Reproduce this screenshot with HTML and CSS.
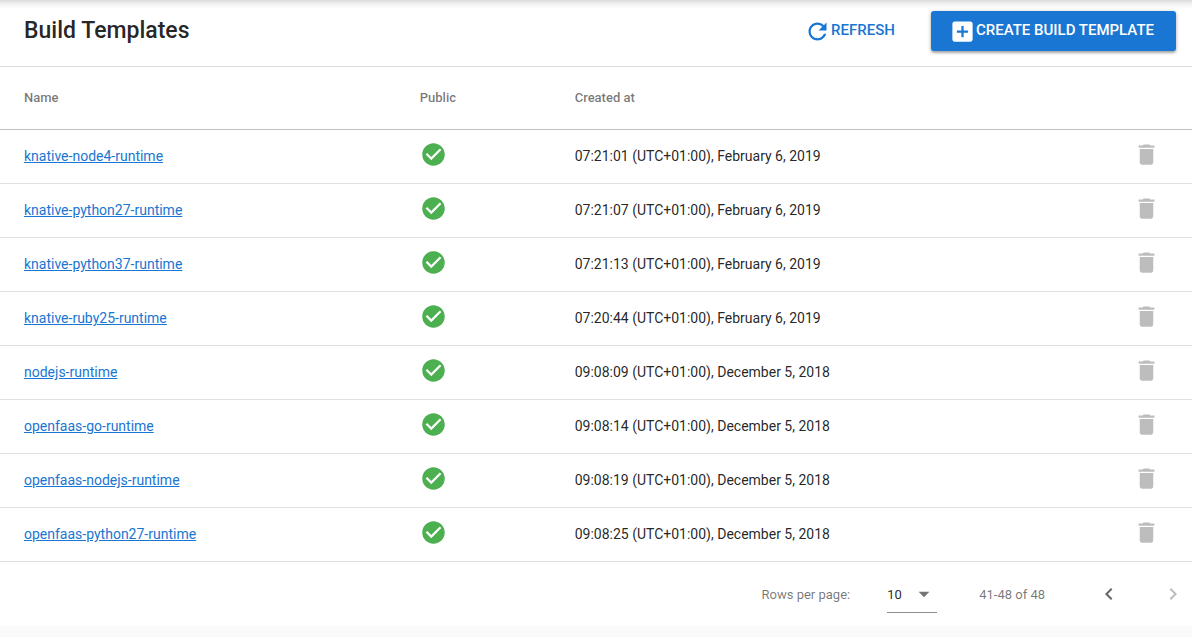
FILE: index.html
```html
<!DOCTYPE html>
<html lang="en">
<head>
<meta charset="utf-8">
<meta name="viewport" content="width=device-width, initial-scale=1">
<title>Build Templates</title>
<link rel="stylesheet" href="styles.css">
</head>
<body>
<svg class="sprite" aria-hidden="true">
  <symbol id="refresh" viewBox="0 0 24 24"><path d="M17.65 6.35C16.2 4.9 14.21 4 12 4c-4.42 0-7.99 3.58-7.99 8s3.57 8 7.99 8c3.73 0 6.84-2.55 7.73-6h-2.08c-.82 2.33-3.04 4-5.65 4-3.31 0-6-2.69-6-6s2.69-6 6-6c1.66 0 3.14.69 4.22 1.78L13 11h7V4l-2.35 2.35z"/></symbol>
  <symbol id="add" viewBox="0 0 24 24"><path d="M19 3H5c-1.11 0-2 .9-2 2v14c0 1.1.89 2 2 2h14c1.1 0 2-.9 2-2V5c0-1.1-.9-2-2-2zm-2 10h-4v4h-2v-4H7v-2h4V7h2v4h4v2z"/></symbol>
  <symbol id="check" viewBox="0 0 24 24"><path d="M12 2C6.480 2 2 6.480 2 12s4.480 10 10 10 10-4.480 10-10S17.520 2 12 2zm-2 15l-5-5 1.410-1.410L10 14.170l7.590-7.590L19 8l-9 9z"/></symbol>
  <symbol id="trash" viewBox="0 0 24 24"><path d="M6 19c0 1.100.9 2 2 2h8c1.100 0 2-.9 2-2V7H6v12zM19 4h-3.500l-1-1h-5l-1 1H5v2h14V4z"/></symbol>
  <symbol id="left" viewBox="0 0 24 24"><path d="M15.410 16.590L10.830 12l4.580-4.590L14 6l-6 6 6 6 1.410-1.410z"/></symbol>
  <symbol id="right" viewBox="0 0 24 24"><path d="M8.590 16.590L13.170 12 8.590 7.410 10 6l6 6-6 6-1.410-1.410z"/></symbol>
  <symbol id="drop" viewBox="0 0 24 24"><path d="M7 10l5 5 5-5z"/></symbol>
</svg>
<main class="panel">
  <header class="toolbar">
    <h1 class="title">Build Templates</h1>
    <div class="actions">
      <button class="button button-text" type="button"><svg class="icon"><use href="#refresh"/></svg><span class="label">REFRESH</span></button>
      <button class="button button-primary" type="button"><svg class="icon"><use href="#add"/></svg><span class="label">CREATE BUILD TEMPLATE</span></button>
    </div>
  </header>
  <table class="table">
    <colgroup><col class="col-name"><col class="col-public"><col><col class="col-actions"></colgroup>
    <thead>
      <tr><th scope="col">Name</th><th scope="col">Public</th><th scope="col">Created at</th><td></td></tr>
    </thead>
    <tbody>
      <tr><td><a class="link" href="#knative-node4-runtime">knative-node4-runtime</a></td><td><svg class="icon public" role="img" aria-label="Public"><use href="#check"/></svg></td><td>07:21:01 (UTC+01:00), February 6, 2019</td><td><button class="icon-button" type="button" aria-label="Delete knative-node4-runtime"><svg class="icon"><use href="#trash"/></svg></button></td></tr>
      <tr><td><a class="link" href="#knative-python27-runtime">knative-python27-runtime</a></td><td><svg class="icon public" role="img" aria-label="Public"><use href="#check"/></svg></td><td>07:21:07 (UTC+01:00), February 6, 2019</td><td><button class="icon-button" type="button" aria-label="Delete knative-python27-runtime"><svg class="icon"><use href="#trash"/></svg></button></td></tr>
      <tr><td><a class="link" href="#knative-python37-runtime">knative-python37-runtime</a></td><td><svg class="icon public" role="img" aria-label="Public"><use href="#check"/></svg></td><td>07:21:13 (UTC+01:00), February 6, 2019</td><td><button class="icon-button" type="button" aria-label="Delete knative-python37-runtime"><svg class="icon"><use href="#trash"/></svg></button></td></tr>
      <tr><td><a class="link" href="#knative-ruby25-runtime">knative-ruby25-runtime</a></td><td><svg class="icon public" role="img" aria-label="Public"><use href="#check"/></svg></td><td>07:20:44 (UTC+01:00), February 6, 2019</td><td><button class="icon-button" type="button" aria-label="Delete knative-ruby25-runtime"><svg class="icon"><use href="#trash"/></svg></button></td></tr>
      <tr><td><a class="link" href="#nodejs-runtime">nodejs-runtime</a></td><td><svg class="icon public" role="img" aria-label="Public"><use href="#check"/></svg></td><td>09:08:09 (UTC+01:00), December 5, 2018</td><td><button class="icon-button" type="button" aria-label="Delete nodejs-runtime"><svg class="icon"><use href="#trash"/></svg></button></td></tr>
      <tr><td><a class="link" href="#openfaas-go-runtime">openfaas-go-runtime</a></td><td><svg class="icon public" role="img" aria-label="Public"><use href="#check"/></svg></td><td>09:08:14 (UTC+01:00), December 5, 2018</td><td><button class="icon-button" type="button" aria-label="Delete openfaas-go-runtime"><svg class="icon"><use href="#trash"/></svg></button></td></tr>
      <tr><td><a class="link" href="#openfaas-nodejs-runtime">openfaas-nodejs-runtime</a></td><td><svg class="icon public" role="img" aria-label="Public"><use href="#check"/></svg></td><td>09:08:19 (UTC+01:00), December 5, 2018</td><td><button class="icon-button" type="button" aria-label="Delete openfaas-nodejs-runtime"><svg class="icon"><use href="#trash"/></svg></button></td></tr>
      <tr><td><a class="link" href="#openfaas-python27-runtime">openfaas-python27-runtime</a></td><td><svg class="icon public" role="img" aria-label="Public"><use href="#check"/></svg></td><td>09:08:25 (UTC+01:00), December 5, 2018</td><td><button class="icon-button" type="button" aria-label="Delete openfaas-python27-runtime"><svg class="icon"><use href="#trash"/></svg></button></td></tr>
    </tbody>
  </table>
  <footer class="pagination">
    <label class="rows-label" for="rows">Rows per page:</label>
    <div class="select-box">
      <select class="select" id="rows"><option>5</option><option selected>10</option><option>25</option></select>
      <svg class="arrow"><use href="#drop"/></svg>
    </div>
    <span class="range">41-48 of 48</span>
    <nav class="pages" aria-label="Pagination">
      <button class="page-button" type="button" aria-label="Previous page"><svg class="chevron"><use href="#left"/></svg></button>
      <button class="page-button" type="button" aria-label="Next page" disabled><svg class="chevron"><use href="#right"/></svg></button>
    </nav>
  </footer>
</main>
</body>
</html>
```
FILE: styles.css
```css
* { box-sizing: border-box; }

body {
  margin: 0;
  background: #fafafa;
  color: rgba(0, 0, 0, 0.87);
  font-family: Roboto, "Liberation Sans", sans-serif;
  font-size: 14px;
}

button, select { font: inherit; }

button {
  padding: 0;
  border: 0;
  background: none;
  cursor: pointer;
}

svg { display: block; fill: currentColor; }

.sprite { display: none; }

.panel { background: #fff; }

.toolbar {
  display: flex;
  align-items: center;
  justify-content: space-between;
  padding: 11px 16px 15px 24px;
  border-bottom: 1px solid #dcdcdc;
  background: linear-gradient(#dadada, #f2f2f2 4px, #fff 9px);
}

.title {
  margin: 0;
  font-size: 23px;
  font-weight: 500;
  line-height: 40px;
}

.actions { display: flex; gap: 14px; }

.button {
  display: flex;
  align-items: center;
  height: 40px;
  padding: 0 22px 0 18px;
  border-radius: 3px;
  font-size: 15px;
  font-weight: 500;
}

.label { padding-bottom: 2px; }

.button-text { color: #1976d2; }

.button-primary {
  background: #1976d2;
  color: #fff;
  box-shadow: 0 1px 4px rgba(0, 0, 0, 0.25), 0 2px 2px rgba(0, 0, 0, 0.2);
}

.icon { width: 27px; height: 27px; }

.table {
  width: 100%;
  border-collapse: collapse;
  table-layout: fixed;
}

.col-name { width: 33.2%; }
.col-public { width: 13%; }
.col-actions { width: 83px; }

.table th,
.table td {
  height: 54px;
  padding: 0 0 0 24px;
  border-bottom: 1px solid #e0e0e0;
  text-align: left;
  vertical-align: middle;
}

.table thead th,
.table thead td {
  height: 62px;
  border-bottom-color: #c2c2c2;
  color: rgba(0, 0, 0, 0.54);
  font-size: 13px;
  font-weight: 500;
}

.link { color: #1976d2; }

.public { margin-bottom: 3px; color: #4caf50; }

.icon-button { margin-bottom: 3px; color: #bdbdbd; }

.icon-button, .page-button { display: block; }

.pagination {
  display: flex;
  align-items: center;
  justify-content: flex-end;
  height: 64px;
  padding: 2px 7px 0 0;
  color: rgba(0, 0, 0, 0.54);
  font-size: 13px;
}

.select-box {
  position: relative;
  width: 50px;
  margin: 0 42px 0 37px;
  border-bottom: 1px solid #8c8c8c;
}

.select {
  display: block;
  width: 100%;
  height: 36px;
  padding: 0;
  border: 0;
  background: none;
  color: rgba(0, 0, 0, 0.87);
  font-size: 13px;
  appearance: none;
}

.arrow {
  position: absolute;
  top: 5px;
  right: 0;
  width: 26px;
  height: 26px;
  pointer-events: none;
}

.pages { display: flex; gap: 40px; margin: 0 0 2px 52px; }

.chevron { width: 24px; height: 24px; }

.page-button { color: #666; }

.page-button:disabled { color: #bdbdbd; cursor: default; }
```
